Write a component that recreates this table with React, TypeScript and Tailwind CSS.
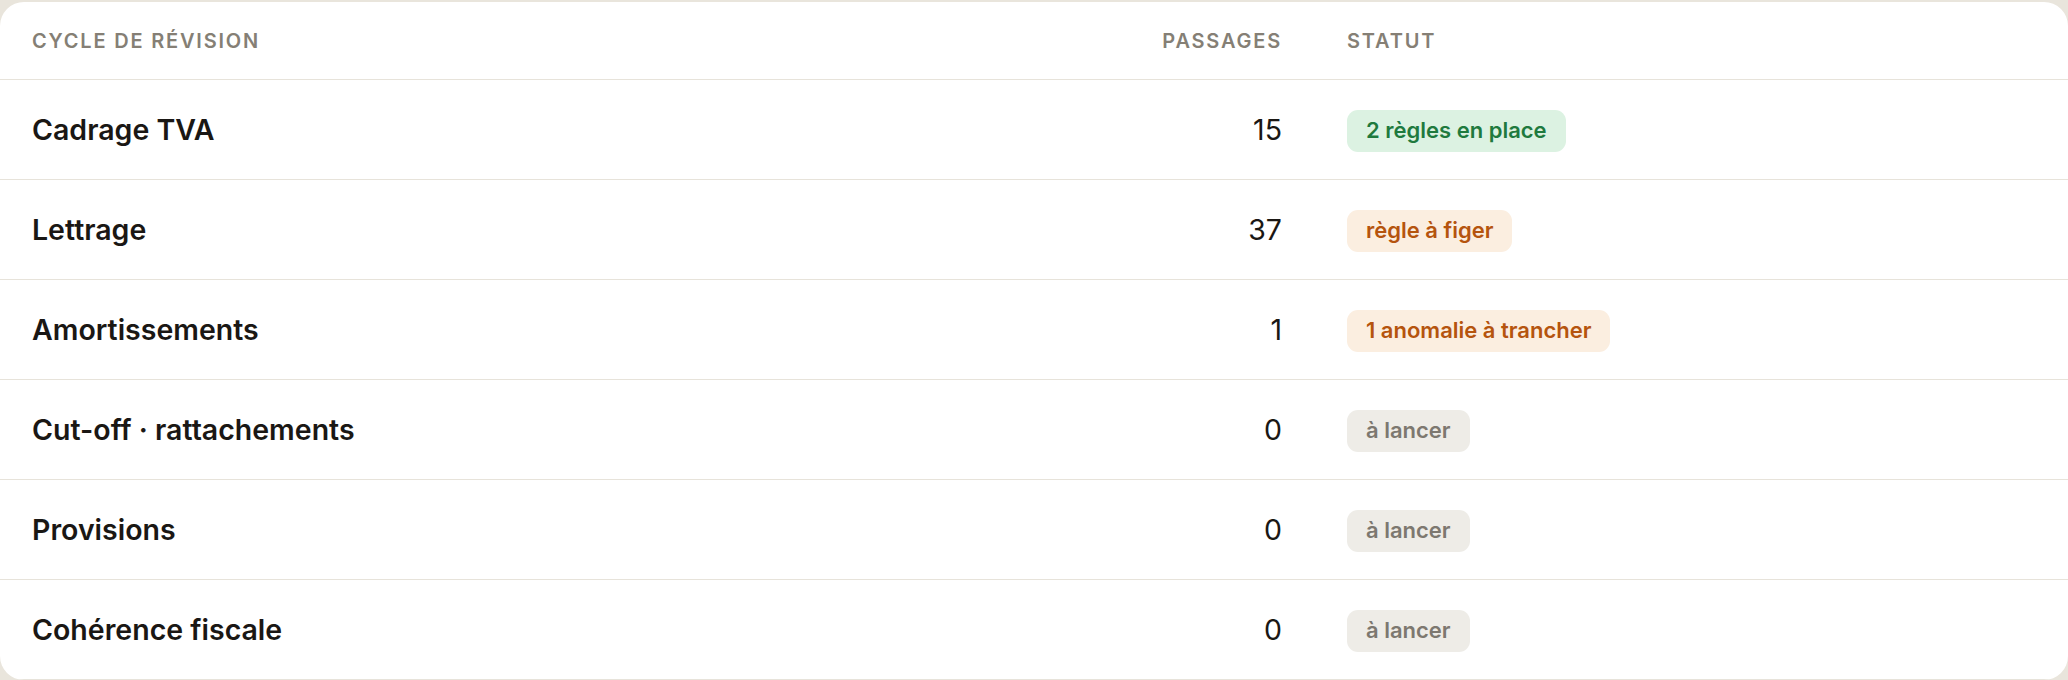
import React from 'react';

type Tone = 'green' | 'orange' | 'gray';

interface Cycle {
  name: string;
  passages: number;
  status: string;
  tone: Tone;
}

const cycles: Cycle[] = [
  { name: 'Cadrage TVA', passages: 15, status: '2 règles en place', tone: 'green' },
  { name: 'Lettrage', passages: 37, status: 'règle à figer', tone: 'orange' },
  { name: 'Amortissements', passages: 1, status: '1 anomalie à trancher', tone: 'orange' },
  { name: 'Cut-off · rattachements', passages: 0, status: 'à lancer', tone: 'gray' },
  { name: 'Provisions', passages: 0, status: 'à lancer', tone: 'gray' },
  { name: 'Cohérence fiscale', passages: 0, status: 'à lancer', tone: 'gray' },
];

const toneClasses: Record<Tone, string> = {
  green: 'bg-[#dcf2e2] text-[#1f7a3e]',
  orange: 'bg-[#fbeee0] text-[#b5540e]',
  gray: 'bg-[#eeece7] text-[#7d7870]',
};

const StatusBadge: React.FC<{ label: string; tone: Tone }> = ({ label, tone }) => (
  <span
    className={`inline-flex h-[42px] items-center rounded-[11px] px-[19px] text-[22px] font-semibold ${toneClasses[tone]}`}
  >
    {label}
  </span>
);

export default function App() {
  return (
    <div className="min-h-[680px] bg-[#e9e5dc] pt-[2px] font-['Inter',sans-serif]">
      <div className="overflow-hidden rounded-[24px] bg-white">
        {/* header */}
        <div className="grid h-[78px] grid-cols-[1fr_200px_754px] items-center border-b border-[#e7e3da] px-8 text-[20px] font-semibold uppercase tracking-[0.09em] text-[#857f75]">
          <div>Cycle de révision</div>
          <div className="text-right">Passages</div>
          <div className="pl-[65px]">Statut</div>
        </div>

        {cycles.map((c) => (
          <div
            key={c.name}
            className="grid h-[100px] grid-cols-[1fr_200px_754px] items-center border-b border-[#e7e3da] px-8 pt-[2px]"
          >
            <div className="text-[28.5px] font-semibold text-[#1a1714]">{c.name}</div>
            <div className="text-right text-[28.5px] text-[#1a1714]">{c.passages}</div>
            <div className="pl-[65px]">
              <StatusBadge label={c.status} tone={c.tone} />
            </div>
          </div>
        ))}
      </div>
    </div>
  );
}
